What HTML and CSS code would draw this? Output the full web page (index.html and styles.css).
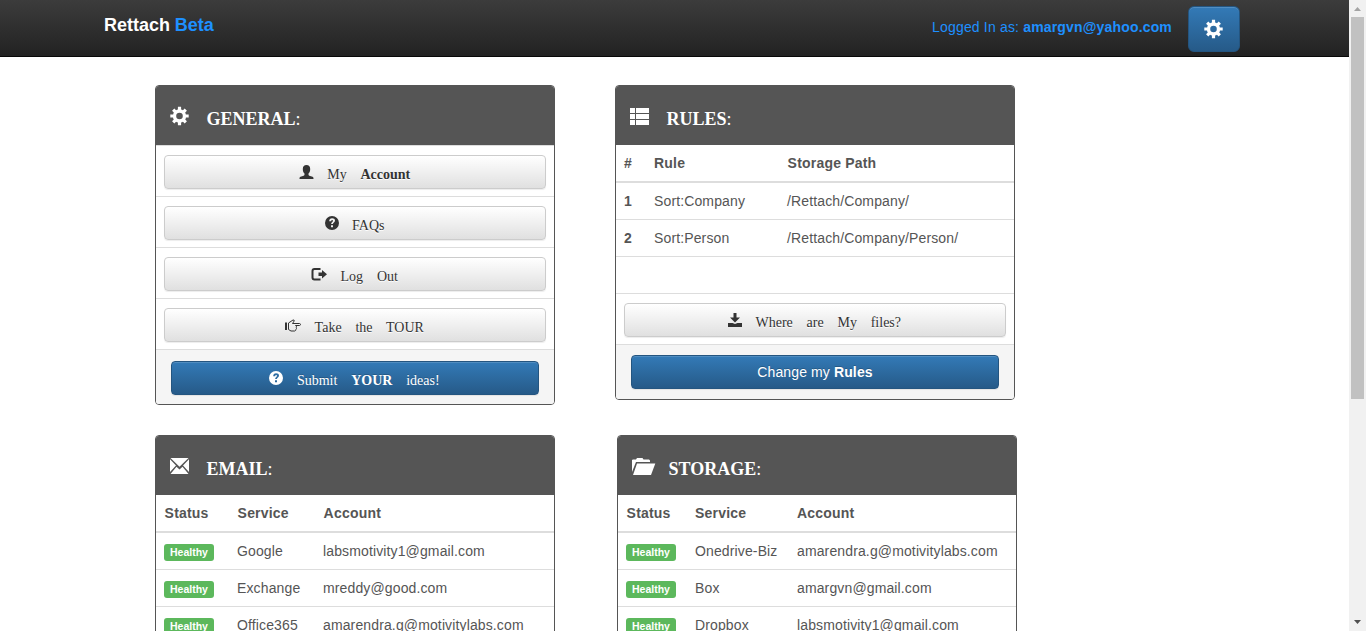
FILE: index.html
```html
<!DOCTYPE html>
<html lang="en">
<head>
<meta charset="utf-8">
<title>Rettach Beta</title>
<link rel="stylesheet" href="styles.css">
</head>
<body>
<svg class="defs" width="0" height="0">
  <symbol id="gear" viewBox="0 0 20 20"><g fill="none" stroke="currentColor"><circle cx="9.500" cy="10" r="5" stroke-width="3.400"/><path stroke-width="3.200" d="M9.500 .8v3.500M9.500 15.700v3.500M.3 10h3.500M15.200 10h3.500M3.200 3.700l2.200 2.200M13.600 14.100l2.200 2.200M3.200 16.300l2.200-2.200M13.600 5.900l2.200-2.200"/></g></symbol>
  <symbol id="question" viewBox="0 0 14 14"><path fill="currentColor" fill-rule="evenodd" d="M7 0a7 7 0 1 1 0 14a7 7 0 0 1 0-14zM4.2 5.2h2c0-.7.3-1.1.9-1.1s.9.3.9.8c0 .9-1.9 1.1-1.9 3.1h1.8c0-1.2 2.1-1.4 2.1-3.4C10 3 8.700 2.300 7.100 2.300C5.300 2.300 4.200 3.400 4.200 5.200zM6 9.200v2h2v-2z"/></symbol>
</svg>
<div class="window">
  <div class="page">
    <header class="navbar">
      <div class="brand">Rettach <span>Beta</span></div>
      <div class="session">Logged In as: <b>amargvn@yahoo.com</b></div>
      <button class="settings" aria-label="Settings"><svg width="20" height="20"><use href="#gear"/></svg></button>
    </header>
    <main>
      <div class="row">
        <section class="panel">
          <h2 class="title"><svg width="20" height="20"><use href="#gear"/></svg><span>GENERAL<i>:</i></span></h2>
          <div class="action"><button class="btn"><svg width="15" height="14" viewBox="0 0 15 14"><path fill="currentColor" d="M7.500 0C9.800 0 11.200 1.500 11.200 4c0 2-.6 3.500-1.700 4.600v1.200c0 .5.3.8.8 1l3.200 1c.8.300 1 .8 1 2.200H.5c0-1.400.2-1.900 1-2.200L4.700 10.800c.5-.2.8-.5.8-1V8.600C4.400 7.500 3.800 6 3.800 4c0-2.500 1.400-4 3.700-4z"/></svg><span>My <b>Account</b></span></button></div>
          <div class="action"><button class="btn"><svg width="14" height="14"><use href="#question"/></svg><span>FAQs</span></button></div>
          <div class="action"><button class="btn"><svg width="16" height="15" viewBox="0 0 16 15"><path fill="none" stroke="currentColor" stroke-width="2" d="M9.500 2H3.500Q1.500 2 1.500 4v6.500q0 2 2 2h6"/><path fill="currentColor" d="M7.500 5.500H11V3l5 4.300L11 11.500V9H7.500z"/></svg><span>Log Out</span></button></div>
          <div class="action"><button class="btn tour"><svg width="16" height="14" viewBox="0 0 16 14"><path fill="currentColor" d="M0 3.500h2v7.500H0z"/><path fill="none" stroke="currentColor" d="M3.500 10.500v-6.500l4.500-3q1.500-.3 1.200 1L7.500 4.500h7q1 .2 1 1t-1 1H10.500q1.500.5.8 2q.6 1-.4 2q0 1.200-1.200 1.500H6z"/></svg><span>Take the TOUR</span></button></div>
          <div class="footer ideas"><button class="btn primary"><svg width="14" height="14"><use href="#question"/></svg><span>Submit <b>YOUR</b> ideas!</span></button></div>
        </section>
        <section class="panel">
          <h2 class="title"><svg width="20" height="20" viewBox="0 0 20 20"><path fill="currentColor" d="M0 2h5v5H0zM6 2h13v5H6zM0 8h5v5H0zM6 8h13v5H6zM0 14h5v5H0zM6 14h13v5H6z"/></svg><span>RULES<i>:</i></span></h2>
          <table class="rules">
            <thead><tr><th>#</th><th>Rule</th><th>Storage Path</th></tr></thead>
            <tbody>
              <tr><td><b>1</b></td><td>Sort:Company</td><td>/Rettach/Company/</td></tr>
              <tr><td><b>2</b></td><td>Sort:Person</td><td>/Rettach/Company/Person/</td></tr>
              <tr><td></td><td></td><td></td></tr>
            </tbody>
          </table>
          <div class="action plain"><button class="btn"><svg width="14" height="14" viewBox="0 0 14 14"><path fill="currentColor" d="M5.500 0h3v4.500H12L7 9.500L2 4.500h3.500zM0 10h4.500L7 11l2.500-1H14v4H0z"/></svg><span>Where are My files?</span></button></div>
          <div class="footer"><button class="btn primary sans"><span>Change my <b>Rules</b></span></button></div>
        </section>
      </div>
      <div class="row lower">
        <section class="panel">
          <h2 class="title"><svg width="20" height="20" viewBox="0 0 20 20"><path fill="currentColor" d="M.5 2h18L9.500 10.800zM0 3.300l6 6.200L0 16zM19 3.300V16l-6-6.500zM.5 18L6.500 10.800l3 2.600l3-2.600l6 7.200z"/></svg><span>EMAIL<i>:</i></span></h2>
          <table class="email">
            <thead><tr><th>Status</th><th>Service</th><th>Account</th></tr></thead>
            <tbody>
              <tr><td><span class="label">Healthy</span></td><td>Google</td><td>labsmotivity1@gmail.com</td></tr>
              <tr><td><span class="label">Healthy</span></td><td>Exchange</td><td>mreddy@good.com</td></tr>
              <tr><td><span class="label">Healthy</span></td><td>Office365</td><td>amarendra.g@motivitylabs.com</td></tr>
            </tbody>
          </table>
        </section>
        <section class="panel">
          <h2 class="title"><svg class="wide" width="24" height="20" viewBox="0 0 24 20"><path fill="currentColor" d="M0 16V4l1-.5h3L5 2h5.500l1 1.500H17l1 1V6H4z"/><path fill="currentColor" d="M5 7.500H23.300L19 19H1z"/></svg><span>STORAGE<i>:</i></span></h2>
          <table class="storage">
            <thead><tr><th>Status</th><th>Service</th><th>Account</th></tr></thead>
            <tbody>
              <tr><td><span class="label">Healthy</span></td><td>Onedrive-Biz</td><td>amarendra.g@motivitylabs.com</td></tr>
              <tr><td><span class="label">Healthy</span></td><td>Box</td><td>amargvn@gmail.com</td></tr>
              <tr><td><span class="label">Healthy</span></td><td>Dropbox</td><td>labsmotivity1@gmail.com</td></tr>
            </tbody>
          </table>
        </section>
      </div>
    </main>
  </div>
  <div class="scrollbar">
    <svg width="17" height="17"><path fill="#a3a3a3" d="M5 11h7L8.500 7z"/></svg>
    <div class="thumb"></div>
    <svg width="17" height="17"><path fill="#505050" d="M5 6h7L8.500 10z"/></svg>
  </div>
</div>
</body>
</html>
```
FILE: styles.css
```css
* { box-sizing: border-box; }
body { margin: 0; overflow: hidden; font: 14px/20px "Liberation Sans", Arial, sans-serif; color: #555; background: #fff; }
.defs { display: block; height: 0; }
.window { display: flex; height: 631px; overflow: hidden; }
.page { flex: 1; height: 631px; overflow: hidden; }

.navbar { display: flex; align-items: flex-start; height: 57px; padding: 6px 109px 0 104px; background: linear-gradient(#3c3c3c, #222); border-bottom: 1px solid #080808; }
.brand { flex: 1; padding-top: 9px; font-size: 18px; font-weight: bold; color: #fff; letter-spacing: -0.02px; }
.brand span, .session { color: #1e90ff; }
.session { padding-top: 11px; margin-right: 16px; letter-spacing: 0.17px; }
.settings { display: grid; place-items: center; width: 52px; height: 46px; padding: 0; border: 1px solid #245580; border-radius: 6px; color: #fff; background: linear-gradient(#337ab7, #265a88); box-shadow: inset 0 1px 0 rgba(255,255,255,.15); }

main { padding: 28px 0 0 155px; }
.row { display: flex; align-items: flex-start; gap: 60px; height: 350px; }
.lower { gap: 62px; }
.panel { width: 400px; border: 1px solid #555; border-radius: 4px; overflow: hidden; background: #fff; }
.lower .panel { height: 240px; }
.title { display: flex; align-items: flex-start; gap: 16.5px; height: 59px; margin: 0; padding: 20px 14px 0; background: #555; color: #fff; font: bold 18px/26px "Liberation Serif", serif; }
.title i { font-style: normal; font-weight: normal; }
.title .wide { margin-right: -4px; }

.action { height: 51px; padding: 9px 8px 0; border-top: 1px solid #ddd; }
.action.plain { height: 50px; border-top: 0; }
.footer { padding: 10px 15px; background: #f5f5f5; border-top: 1px solid #ddd; }
.footer.ideas { padding: 11px 15px 9px; }
.btn { display: flex; align-items: flex-start; justify-content: center; gap: 13.5px; width: 100%; height: 34px; padding: 9px 1px 0 0; border: 1px solid #ccc; border-radius: 4px; color: #333; background: linear-gradient(#fff, #e0e0e0); box-shadow: inset 0 1px 0 rgba(255,255,255,.15), 0 1px 1px rgba(0,0,0,.075); font: 14px/20px "Liberation Serif", serif; word-spacing: 10.3px; text-shadow: 0 1px 0 #fff; }
.btn.tour svg { margin-top: 1px; }
.btn.primary { border-color: #245580; color: #fff; background: linear-gradient(#337ab7, #265a88); text-shadow: 0 -1px 0 rgba(0,0,0,.2); }
.btn.sans { padding-top: 6px; padding-right: 0; font-family: "Liberation Sans", Arial, sans-serif; word-spacing: 0; letter-spacing: 0.12px; }

table { width: 100%; table-layout: fixed; border-collapse: separate; border-spacing: 0; letter-spacing: 0.13px; }
th, td { padding: 8px 0 8px 8px; text-align: left; white-space: nowrap; }
th { height: 38px; border-bottom: 2px solid #ddd; letter-spacing: 0.2px; }
td { height: 37px; border-bottom: 1px solid #ddd; }
.email th, .storage th:first-child { padding-left: 8.6px; }
.rules th:nth-child(3) { padding-left: 8.6px; }
.rules th:nth-child(1) { width: 30px; }
.rules th:nth-child(2) { width: 133px; }
.email th:nth-child(1) { width: 73px; }
.email th:nth-child(2) { width: 86px; }
.storage th:nth-child(1) { width: 69px; }
.storage th:nth-child(2) { width: 102px; }
.label { display: block; width: 50px; height: 17px; margin-top: 3px; border-radius: 3px; background: #5cb85c; color: #fff; font-size: 10.5px; font-weight: bold; line-height: 17px; text-align: center; letter-spacing: 0; }

.scrollbar { display: flex; flex-direction: column; width: 17px; background: #f1f1f1; }
.scrollbar svg:last-child { margin-top: auto; }
.thumb { width: 13px; height: 382px; margin-left: 2px; background: #c1c1c1; }
```
